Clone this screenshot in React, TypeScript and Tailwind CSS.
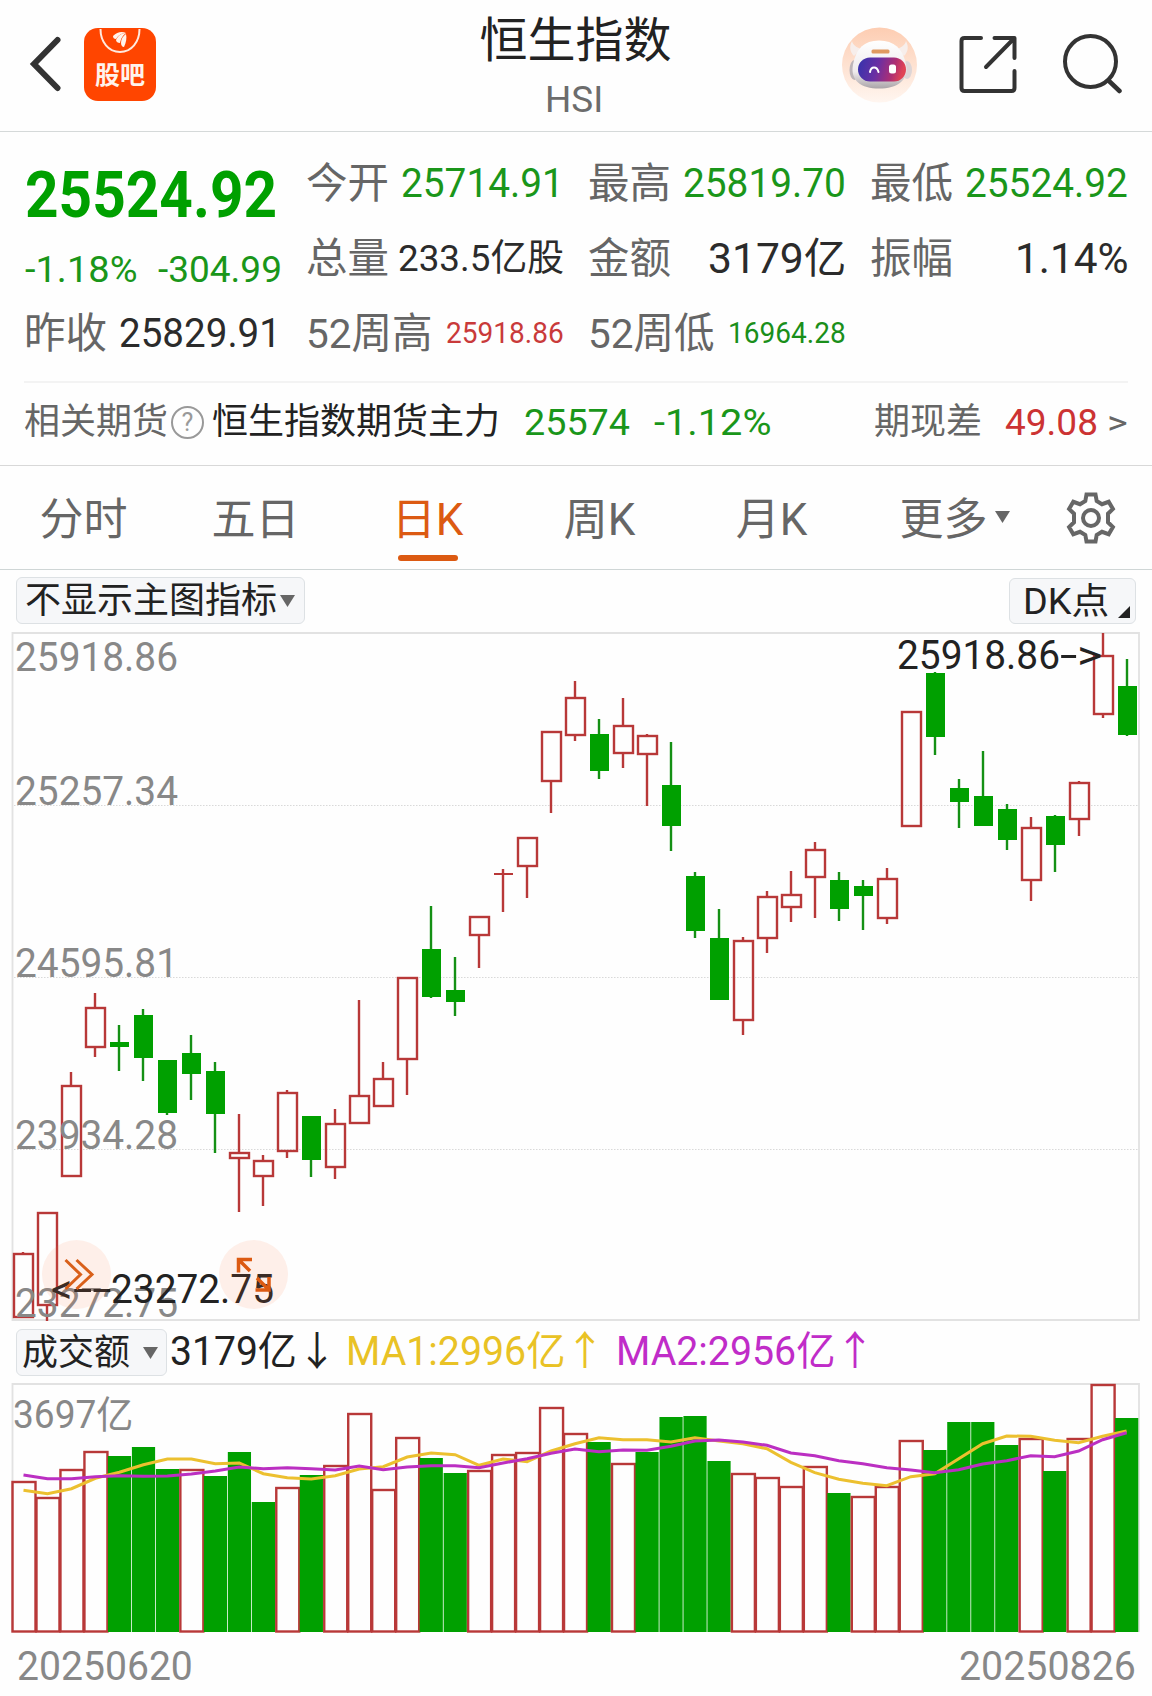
import { useLayoutEffect, useRef, useState } from "react";
import type { ReactNode } from "react";

// [up, high, top, bottom, low]
type Candle = [number, number, number, number, number];

const candles: Candle[] = [
  [1, 1252, 1253, 1318, 1318],
  [1, 1212, 1212, 1306, 1321],
  [1, 1072, 1085, 1177, 1177],
  [1, 993, 1007, 1048, 1057],
  [0, 1025, 1042, 1047, 1071],
  [0, 1009, 1015, 1058, 1081],
  [0, 1060, 1060, 1113, 1115],
  [0, 1035, 1053, 1074, 1100],
  [0, 1062, 1071, 1114, 1153],
  [1, 1114, 1152, 1159, 1212],
  [1, 1155, 1160, 1177, 1206],
  [1, 1090, 1092, 1152, 1158],
  [0, 1116, 1116, 1160, 1177],
  [1, 1109, 1123, 1168, 1179],
  [1, 1000, 1095, 1124, 1124],
  [1, 1062, 1078, 1107, 1107],
  [1, 977, 977, 1060, 1095],
  [0, 906, 949, 997, 998],
  [0, 957, 990, 1002, 1016],
  [1, 916, 916, 936, 968],
  [1, 869, 873, 875, 912],
  [1, 837, 837, 867, 898],
  [1, 731, 731, 782, 813],
  [1, 681, 697, 736, 741],
  [0, 719, 734, 771, 779],
  [1, 698, 725, 754, 768],
  [1, 734, 735, 755, 806],
  [0, 742, 785, 826, 851],
  [0, 872, 876, 931, 938],
  [0, 909, 938, 1000, 1000],
  [1, 937, 940, 1021, 1035],
  [1, 891, 896, 939, 953],
  [1, 871, 894, 908, 922],
  [1, 842, 849, 878, 918],
  [0, 872, 880, 909, 921],
  [0, 880, 886, 896, 930],
  [1, 868, 878, 919, 924],
  [1, 711, 711, 827, 827],
  [0, 672, 673, 737, 755],
  [0, 779, 788, 802, 828],
  [0, 751, 796, 826, 826],
  [0, 804, 809, 840, 850],
  [1, 817, 827, 881, 901],
  [0, 815, 816, 845, 872],
  [1, 781, 782, 820, 836],
  [1, 633, 655, 715, 718],
  [0, 659, 686, 735, 736],
];

const volumeTops = [
  97, 113, 85, 67, 72, 63, 85, 85, 92, 68, 118, 103, 91, 81, 29, 105, 53, 74, 89, 86, 70, 68, 23, 49,
  58, 79, 68, 33, 32, 77, 89, 93, 102, 82, 109, 112, 102, 56, 66, 38, 38, 61, 54, 87, 54, 0, 34,
];

const volumeDown = [4, 5, 6, 8, 9, 10, 12, 17, 18, 24, 26, 27, 28, 29, 34, 38, 39, 40, 41, 43, 46];

const ma1 = [
  106.3, 109.7, 104.7, 94.3, 88.3, 80.7, 75, 75, 79.7, 79, 89.7, 93.7, 95, 91.7, 85, 82.7, 73, 69, 70.7,
  81.3, 75, 77.7, 67, 59.7, 53.7, 55.7, 55.7, 58, 53.7, 57, 59.7, 64.7, 78.3, 88.7, 95.3, 99.3, 101.7,
  92.7, 89.7, 74.7, 59.7, 52, 52.3, 56.3, 58.7, 52.3, 47,
];

const ma2 = [
  91, 94.7, 94.7, 92.7, 91.7, 92.3, 92, 90, 87, 83, 84.7, 83.7, 84.7, 86, 82, 85.7, 83, 81.7, 81.7, 83.7,
  79, 74.7, 69.3, 65, 67.7, 66, 66.3, 62.3, 57, 56, 58, 61.3, 69, 71.7, 76.7, 79.7, 83.7, 86, 88.7, 85.7,
  80, 76.7, 71.7, 72.7, 67, 55.7, 48.7,
];

const linePoints = (values: number[]) =>
  values.map((v, i) => `${(23.5 + i * 23.98).toFixed(1)},${v}`).join(" ");

// Squeezes a single line of text so that it fills the width of its box
function Fit({ className = "", children }: { className?: string; children: ReactNode }) {
  const outer = useRef<HTMLDivElement>(null);
  const inner = useRef<HTMLSpanElement>(null);
  const [scale, setScale] = useState(1);

  useLayoutEffect(() => {
    if (outer.current && inner.current) {
      setScale(outer.current.clientWidth / inner.current.offsetWidth);
    }
  }, []);

  return (
    <div ref={outer} className={`shrink-0 whitespace-nowrap ${className}`}>
      <span ref={inner} className="inline-block origin-left" style={{ transform: `scaleX(${scale})` }}>
        {children}
      </span>
    </div>
  );
}

function AppIcon() {
  return (
    <div className="relative flex h-[73px] w-[72px] justify-center rounded-[14px] bg-[#ff4500]">
      <svg className="absolute inset-0" width="73" height="73" viewBox="0 0 73 73" fill="none">
        <path d="M16.500 1c0 13 8 23 19.500 23S55.500 14 55.500 1" stroke="#ffe9de" strokeWidth="2" />
        <path d="M29 8c4-4 9-5 13-3-5 0-8 3-10 6-2 0-3-1-3-3z" fill="#fff3ec" />
        <path d="M32 12c2-4 5-7 10-7-4 3-5 6-6 10-2 0-4-1-4-3z" fill="#fff3ec" />
        <path d="M37 15c0-4 2-7 5-9 1 4 0 9-2 13-2 0-3-2-3-4z" fill="#fff3ec" />
      </svg>
      <span className="mt-[34px] text-[25px] leading-[27px] font-bold text-[#fff3ec]">股吧</span>
    </div>
  );
}

function Robot() {
  return (
    <svg width="76" height="76" viewBox="0 0 76 76" fill="none">
      <defs>
        <linearGradient id="halo" x1="0" y1="0" x2="0" y2="1">
          <stop offset="0" stopColor="#fdcdb2" />
          <stop offset="1" stopColor="#fff6f0" />
        </linearGradient>
        <linearGradient id="shell" x1="0" y1="0" x2="0" y2="1">
          <stop offset="0" stopColor="#ffffff" />
          <stop offset="0.65" stopColor="#efebec" />
          <stop offset="1" stopColor="#aaa4a8" />
        </linearGradient>
        <linearGradient id="visor" x1="0" y1="0" x2="1" y2="0.15">
          <stop offset="0" stopColor="#3333ad" />
          <stop offset="0.45" stopColor="#6a2fa3" />
          <stop offset="0.8" stopColor="#b02f72" />
          <stop offset="1" stopColor="#e04455" />
        </linearGradient>
      </defs>
      <circle cx="37.500" cy="38" r="37.500" fill="url(#halo)" />
      <path d="M12 29c-4-4-5-9-2-15 1 4 4 6 9 8zM62 29c4-4 5-9 2-15-1 4-4 6-9 8z" fill="#f7eeeb" />
      <ellipse cx="12.500" cy="43" rx="5" ry="10" fill="#bdb5b8" />
      <ellipse cx="65" cy="43" rx="5" ry="9" fill="#ddd5d6" />
      <path d="M37 13.500c15 0 24 8 27 24 3 16-9 24-27 24s-29-8-26-24c3-16 11-24 26-24z" fill="url(#shell)" />
      <rect x="29.500" y="22.500" width="18" height="4" rx="1.500" fill="#e09a60" />
      <rect x="16" y="30.500" width="48" height="24" rx="12" fill="url(#visor)" />
      <path d="M28 45c1-6 7-6 8.500 0" stroke="#fff" strokeWidth="2" strokeLinecap="round" />
      <rect x="47" y="37.500" width="7" height="9" rx="2.500" fill="#fff" />
    </svg>
  );
}

function Header() {
  return (
    <header className="grid h-[132px] grid-cols-[1fr_200px_1fr] border-b border-[#d5d9d9]">
      <div className="flex items-start pl-[29px]">
        <svg className="mt-[36px]" width="32" height="56" viewBox="0 0 32 56" fill="none">
          <path d="M28.500 4L5 28L28.500 52" stroke="#333" strokeWidth="6" strokeLinecap="round" />
        </svg>
        <div className="mt-[28px] ml-[23px]">
          <AppIcon />
        </div>
      </div>
      <div className="pt-[12px] text-center">
        <h1 className="-ml-px text-[48px] leading-[58px] whitespace-nowrap text-[#222]">恒生指数</h1>
        <Fit className="ml-[69px] mt-[6px] w-[58px] text-left text-[37.500px] leading-[46px] text-[#6c6c6c]">HSI</Fit>
      </div>
      <div className="flex items-start justify-end pr-[29px]">
        <div className="mt-[27px]">
          <Robot />
        </div>
        <svg className="mt-[34px] ml-[40px]" width="60" height="60" viewBox="0 0 60 60" fill="none">
          <path
            d="M23 4H6.500Q3.500 4 3.500 7V54Q3.500 57 6.500 57H53.500Q56.500 57 56.500 54V37M36.500 4H56.500V24M55 5.500L28 33"
            stroke="#333"
            strokeWidth="4"
            strokeLinecap="round"
            strokeLinejoin="round"
          />
        </svg>
        <svg className="mt-[32px] ml-[43px]" width="62" height="62" viewBox="0 0 62 62" fill="none">
          <circle cx="29.500" cy="29.500" r="25.500" stroke="#333" strokeWidth="4" />
          <path d="M47.500 48.500L58.500 59" stroke="#333" strokeWidth="4.500" strokeLinecap="round" />
        </svg>
      </div>
    </header>
  );
}

function Stat({ label, children }: { label: ReactNode; children?: ReactNode }) {
  return (
    <div className="flex h-[75px] items-center justify-between leading-[75px]">
      <div className="shrink-0 text-[41.500px] whitespace-nowrap text-[#666]">{label}</div>
      {children}
    </div>
  );
}

function Quote() {
  return (
    <section className="border-b border-[#d8d8d8] px-6 pt-[14px] pb-[3px]">
      <div className="grid grid-cols-4 gap-x-6">
        <div>
          <Fit className="ml-px h-[98px] w-[252px] text-[65.500px] leading-[98px] font-bold text-[#00a000]">25524.92</Fit>
          <div className="flex h-[52px] justify-between text-[37px] leading-[52px] text-[#1a961a]">
            <Fit className="ml-px w-[112px]">-1.18%</Fit>
            <Fit className="w-[124px]">-304.99</Fit>
          </div>
          <Stat label="昨收">
            <Fit className="mr-px w-[162px] text-[40px] text-[#2b2b2b]">25829.91</Fit>
          </Stat>
        </div>
        <div>
          <Stat label="今开">
            <Fit className="w-[163px] text-[40px] text-[#1a961a]">25714.91</Fit>
          </Stat>
          <Stat label="总量">
            <Fit className="w-[166px] text-[37px] text-[#2b2b2b]">233.5亿股</Fit>
          </Stat>
          <Stat label={<Fit className="w-[127px]">52周高</Fit>}>
            <Fit className="w-[118px] text-[29px] text-[#c93a3a]">25918.86</Fit>
          </Stat>
        </div>
        <div>
          <Stat label="最高">
            <Fit className="w-[163px] text-[40px] text-[#1a961a]">25819.70</Fit>
          </Stat>
          <Stat label="金额">
            <Fit className="w-[138px] text-[42px] text-[#2b2b2b]">3179亿</Fit>
          </Stat>
          <Stat label={<Fit className="w-[127px]">52周低</Fit>}>
            <Fit className="w-[118px] text-[29px] text-[#1a8f1a]">16964.28</Fit>
          </Stat>
        </div>
        <div>
          <Stat label="最低">
            <Fit className="w-[163px] text-[40px] text-[#1a961a]">25524.92</Fit>
          </Stat>
          <Stat label="振幅">
            <Fit className="-mr-px w-[114px] text-[42px] text-[#2b2b2b]">1.14%</Fit>
          </Stat>
        </div>
      </div>
      <div className="mt-[10px] h-[2px] bg-[#f3f3f3]" />
      <div className="flex h-[79px] items-center text-[36px] leading-[81px] whitespace-nowrap">
        <span className="text-[#666]">相关期货</span>
        <div className="ml-[3px] flex size-[33px] items-center justify-center rounded-full border-2 border-[#999] text-[25px] leading-none text-[#999]">
          ?
        </div>
        <span className="ml-[8px] text-[#222]">恒生指数期货主力</span>
        <Fit className="ml-[24px] w-[106px] text-[37px] text-[#1a961a]">25574</Fit>
        <Fit className="ml-[24px] w-[117px] text-[37px] text-[#1a961a]">-1.12%</Fit>
        <span className="ml-auto text-[#666]">期现差</span>
        <Fit className="ml-[23px] w-[93px] text-[37px] text-[#cc3333]">49.08</Fit>
        <Fit className="ml-[9px] w-[21px] text-[34px] text-[#666]">&gt;</Fit>
      </div>
    </section>
  );
}

function Gear() {
  return (
    <svg width="52" height="52" viewBox="0 0 52 52" fill="none" stroke="#666" strokeWidth="4">
      <path d="M21.500 2.500h9l1.200 6.500 5.300 3.200 6.700-2.400 4.200 7.200-4.900 4.700v8.600l4.900 4.700-4.200 7.200-6.700-2.400-5.300 3.200-1.200 6.500h-9l-1.200-6.500-5.300-3.200-6.700 2.400-4.200-7.200 4.900-4.700v-8.600l-4.900-4.700 4.200-7.200 6.700 2.400 5.300-3.200z" />
      <circle cx="26" cy="26" r="8" />
    </svg>
  );
}

const tabs = ["分时", "五日", "日K", "周K", "月K", "更多"];

function Triangle() {
  return (
    <svg width="15" height="12" viewBox="0 0 15 12">
      <path d="M0 0h15L7.500 12z" fill="#666" />
    </svg>
  );
}

function Tabs() {
  return (
    <nav className="flex h-[104px] border-b border-[#cfd6d6]">
      {tabs.map((tab) => (
        <div
          key={tab}
          className={`relative w-[172px] pt-[6px] pr-[5px] text-center text-[44px] leading-[97px] ${
            tab === "日K" ? "text-[#dc5a12]" : "text-[#666]"
          }`}
        >
          {tab}
          {tab === "日K" && (
            <div className="absolute bottom-[8px] left-[54px] h-[6px] w-[60px] rounded-full bg-[#dc5a12]" />
          )}
          {tab === "更多" && (
            <div className="absolute top-[45px] left-[135px] leading-none">
              <Triangle />
            </div>
          )}
        </div>
      ))}
      <div className="flex flex-1 justify-center pt-[26px] pr-[3px]">
        <Gear />
      </div>
    </nav>
  );
}

function Toolbar() {
  return (
    <div className="flex h-[62px] items-start justify-between px-4 pt-[7px] text-[36px] leading-[44px] text-[#222]">
      <button className="flex h-[47px] w-[289px] items-center rounded-[6px] border border-[#dde1e4] bg-[#f6f7f9] pt-px pl-[8px] whitespace-nowrap">
        <span className="mr-[3px]">不显示主图指标</span>
        <Triangle />
      </button>
      <button className="relative mt-px h-[46px] w-[127px] rounded-[6px] border border-[#dde1e4] bg-[#f6f7f9] pt-px pl-[13px]">
        <Fit className="w-[86px] text-left">DK点</Fit>
        <svg className="absolute right-[5px] bottom-[5px]" width="12" height="12" viewBox="0 0 12 12">
          <path d="M12 0v12H0z" fill="#222" />
        </svg>
      </button>
    </div>
  );
}

function KLine() {
  return (
    <div className="relative h-[690px] text-[40.500px] leading-[40px] text-[#888]">
      <svg className="block" width="1152" height="690" viewBox="0 632 1152 690" fill="none">
        <path d="M12.500 633H1139V1320H12.500z" stroke="#e2e2e2" strokeWidth="1.800" />
        {[805, 977, 1149].map((y) => (
          <path key={y} d={`M14 ${y + 0.5}H1138`} stroke="#d9d9d9" strokeDasharray="1.500 1.500" />
        ))}
        {candles.map(([up, high, top, bottom, low], i) => {
          const x = 23 + i * 24;
          const color = up ? "#b83838" : "#00a000";
          const wick = up ? "#b83838" : "#149014";
          const flat = bottom - top <= 2;
          return (
            <g key={i}>
              {high < top && <rect x={x - 1.2} y={high} width="2.400" height={top - high} fill={wick} />}
              {low > bottom && <rect x={x - 1.2} y={bottom} width="2.400" height={low - bottom} fill={wick} />}
              {up && !flat ? (
                <rect x={x - 9} y={top + 1} width="19" height={bottom - top - 2} stroke={color} strokeWidth="2.400" />
              ) : (
                <rect x={x - 9} y={top} width="19" height={bottom - top} fill={color} />
              )}
            </g>
          );
        })}
      </svg>
      <Fit className="absolute top-[5px] left-[15px] w-[163px]">25918.86</Fit>
      <Fit className="absolute top-[139px] left-[15px] w-[163px]">25257.34</Fit>
      <Fit className="absolute top-[311px] left-[15px] w-[163px]">24595.81</Fit>
      <Fit className="absolute top-[483px] left-[15px] w-[163px]">23934.28</Fit>
      <Fit className="absolute top-[651px] left-[15px] w-[163px]">23272.75</Fit>
      <div className="absolute top-[3px] left-[897px] flex text-[#222]">
        <Fit className="w-[163px]">25918.86</Fit>
        <Fit className="w-[17px]">-</Fit>
        <Fit className="w-[25px]">&gt;</Fit>
      </div>
      <div className="absolute top-[637px] left-[51px] flex text-[#222]">
        <Fit className="w-[22px]">&lt;</Fit>
        <Fit className="w-[38px]">--</Fit>
        <Fit className="w-[163px]">23272.75</Fit>
      </div>
      <svg className="absolute top-[608px] left-[42px]" width="69" height="69" viewBox="0 0 69 69" fill="none">
        <circle cx="34.500" cy="34.500" r="34.500" fill="#ff7a3c" fillOpacity="0.110" />
        <path d="M23.500 20L38.500 34.500L23.500 49M34.500 20L50 34.500L34.500 49" stroke="#d9601a" strokeWidth="3" />
      </svg>
      <svg className="absolute top-[608px] left-[219px]" width="69" height="69" viewBox="0 0 69 69" fill="none">
        <circle cx="34.500" cy="34.500" r="34.500" fill="#ff7a3c" fillOpacity="0.110" />
        <path
          d="M33 19.500H19.500V32.500M20 20L31 31M36.500 50H50V37M49.500 49.500L38 38"
          stroke="#dc5a12"
          strokeWidth="3.500"
        />
      </svg>
    </div>
  );
}

function Volume() {
  return (
    <section>
      <div className="flex h-[61px] items-start pt-[7px] pl-4 text-[40px] leading-[46px] whitespace-nowrap">
        <button className="flex h-[47px] w-[151px] shrink-0 items-center rounded-[6px] border border-[#dde1e4] bg-[#f6f7f9] pl-[5px] text-[36px] leading-[44px] text-[#222]">
          <span className="mr-[13px]">成交额</span>
          <Triangle />
        </button>
        <Fit className="ml-[3px] w-[127px] text-[#222]">3179亿</Fit>
        <span className="w-[40px] text-center text-[#222]">↓</span>
        <Fit className="ml-[9px] w-[219px] text-[#e9c225]">MA1:2996亿</Fit>
        <span className="w-[40px] text-center text-[#e9c225]">↑</span>
        <Fit className="ml-[11px] w-[219px] text-[#c02cc8]">MA2:2956亿</Fit>
        <span className="w-[40px] text-center text-[#c02cc8]">↑</span>
      </div>
      <div className="relative h-[250px]">
        <svg className="block" width="1152" height="250" viewBox="0 -1 1152 250" fill="none">
          <path d="M12.500 248V0H1139V248" stroke="#e2e2e2" strokeWidth="1.800" />
          {volumeTops.map((top, i) =>
            volumeDown.includes(i) ? (
              <rect key={i} x={12 + i * 23.98} y={top} width="23.200" height={248 - top} fill="#00a000" />
            ) : (
              <rect
                key={i}
                x={12.5 + i * 23.98}
                y={top + 1}
                width="23"
                height={246.5 - top}
                stroke="#b83838"
                strokeWidth="2.400"
              />
            )
          )}
          <polyline points={linePoints(ma1)} stroke="#ecc02f" strokeWidth="3" />
          <polyline points={linePoints(ma2)} stroke="#bb2fc2" strokeWidth="3" />
        </svg>
        <Fit className="absolute top-[12px] left-[13px] w-[120px] text-[38px] leading-[40px] text-[#888]">3697亿</Fit>
      </div>
      <div className="flex justify-between pt-[14px] pr-[16px] pl-[17px] text-[40px] leading-[40px] text-[#888]">
        <Fit className="w-[176px]">20250620</Fit>
        <Fit className="w-[177px]">20250826</Fit>
      </div>
    </section>
  );
}

export default function App() {
  return (
    <div className="h-[1696px] w-[1152px] overflow-hidden bg-[#fefefe] font-['Roboto','Noto_Sans_CJK_SC',sans-serif]">
      <Header />
      <Quote />
      <Tabs />
      <Toolbar />
      <KLine />
      <Volume />
    </div>
  );
}
